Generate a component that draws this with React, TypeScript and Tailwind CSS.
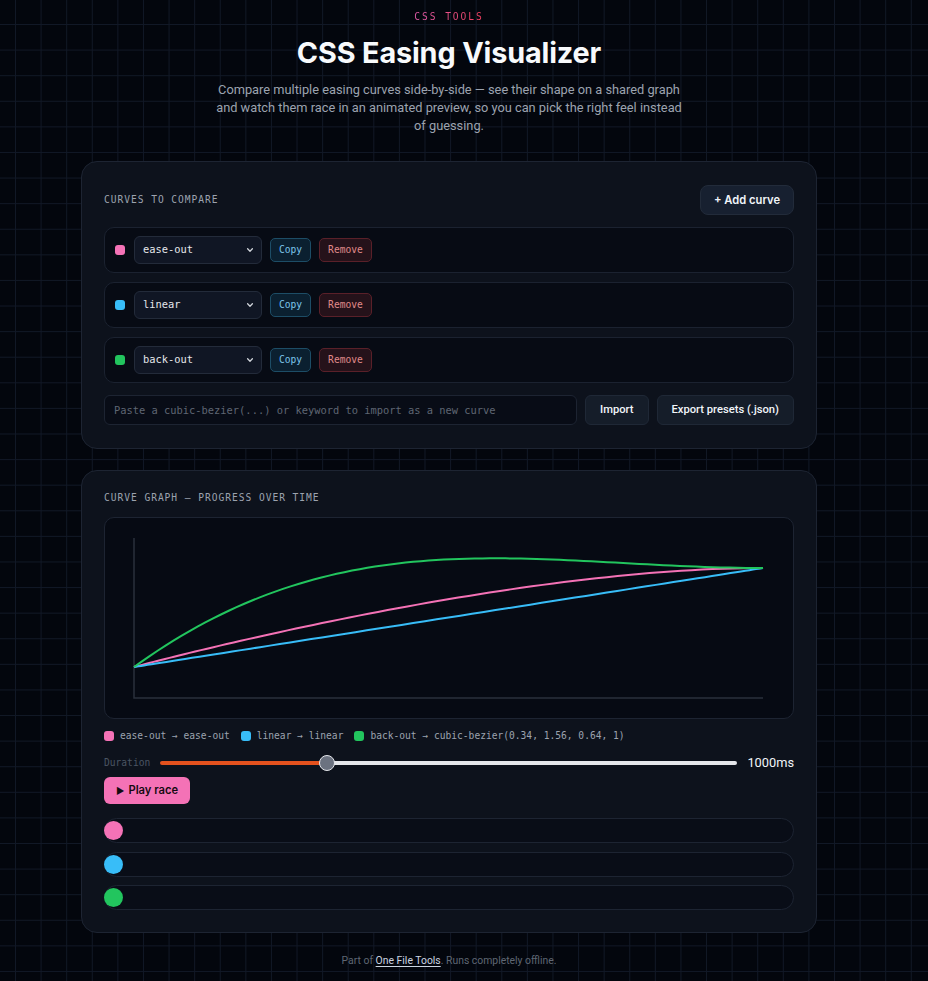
import React from 'react';

type Curve = {
  id: number;
  name: string;
  color: string;
  css: string;
  bez: [number, number, number, number];
};

const curves: Curve[] = [
  { id: 1, name: 'ease-out', color: '#f472b6', css: 'ease-out', bez: [0, 0, 0.58, 1] },
  { id: 2, name: 'linear', color: '#38bdf8', css: 'linear', bez: [0, 0, 1, 1] },
  { id: 3, name: 'back-out', color: '#22c55e', css: 'cubic-bezier(0.34, 1.56, 0.64, 1)', bez: [0.34, 1.56, 0.64, 1] },
];

const mono = "font-['DejaVu_Sans_Mono','Liberation_Mono',monospace]";

// plot area inside the graph box
const PX0 = 29;
const PX1 = 658;
const PY0 = 149; // progress 0
const PY1 = 50; // progress 1

function bez(t: number, a: number, b: number) {
  const u = 1 - t;
  return 3 * u * u * t * a + 3 * u * t * t * b + t * t * t;
}

function curvePath([x1, y1, x2, y2]: Curve['bez']) {
  const pts: string[] = [];
  for (let i = 0; i <= 80; i++) {
    const t = i / 80;
    const x = PX0 + bez(t, x1, x2) * (PX1 - PX0);
    const y = PY0 - bez(t, y1, y2) * (PY0 - PY1);
    pts.push(`${i === 0 ? 'M' : 'L'}${x.toFixed(2)},${y.toFixed(2)}`);
  }
  return pts.join(' ');
}

const Chevron = () => (
  <svg width="8" height="8" viewBox="0 0 10 10" fill="none" stroke="#d1d5db" strokeWidth="1.6" strokeLinecap="round" strokeLinejoin="round">
    <path d="M2 3.5 L5 6.5 L8 3.5" />
  </svg>
);

const CurveRow: React.FC<{ curve: Curve }> = ({ curve }) => (
  <div className="flex h-[46px] items-center gap-2 rounded-[10px] border border-[#1b2230] bg-[#070b14] px-[10px]">
    <span className="mr-px h-[10px] w-[10px] rounded-[3px]" style={{ background: curve.color }} />
    <div className={`flex h-[28px] w-[128px] items-center justify-between rounded-[6px] border border-[#232b3a] bg-[#101624] pl-[8px] pr-[7px] text-[10.4px] text-[#e5e7eb] ${mono}`}>
      <span>{curve.name}</span>
      <Chevron />
    </div>
    <button className={`h-[24px] rounded-[5px] border border-[#1d4d66] bg-[#0b2030] px-[8px] text-[9.6px] text-[#7cc4ea] ${mono}`}>
      Copy
    </button>
    <button className={`h-[24px] rounded-[5px] border border-[#5a2029] bg-[#25121a] px-[8px] text-[9.6px] text-[#e08b8b] ${mono}`}>
      Remove
    </button>
  </div>
);

export default function App() {
  return (
    <div className="min-h-screen bg-[#03060d] [background-image:linear-gradient(to_right,#111826_1px,transparent_1px),linear-gradient(to_bottom,#111826_1px,transparent_1px)] [background-size:25.6px_25.6px] [background-position:15px_24px] font-['Inter','Liberation_Sans',sans-serif] text-white">
      <div className="flex flex-col items-center pr-[30px] pt-[11px] pb-[15px]">
        <div className={`bg-gradient-to-r from-[#e05aa8] to-[#f43f5e] bg-clip-text text-[9.6px] leading-[12px] tracking-[0.2em] text-transparent ${mono}`}>
          CSS TOOLS
        </div>
        <h1 className="mt-[12px] text-[28.8px] font-bold leading-[35px] tracking-[-0.005em] text-[#f8fafc]">CSS Easing Visualizer</h1>
        <p className="mt-[11px] w-[480px] text-center font-['Roboto',sans-serif] text-[12.8px] leading-[18px] text-[#9ca3af]">
          Compare multiple easing curves side-by-side — see their shape on a shared graph and watch them race in an animated preview, so you can pick the right feel instead of guessing.
        </p>

        {/* curve list */}
        <section className="mt-[26px] w-[736px] rounded-[16px] border border-[#1d2432] bg-[#0d121c] px-[22px] pb-[23px] pt-[23px]">
          <div className="flex items-center justify-between">
            <h2 className={`text-[9.6px] tracking-[0.1em] text-[#9ca3af] ${mono}`}>CURVES TO COMPARE</h2>
            <button className="h-[30px] rounded-[8px] border border-[#222b3a] bg-[#172030] px-[13px] text-[11.2px] font-semibold text-[#f1f5f9]">
              + Add curve
            </button>
          </div>
          <div className="mt-[12px] flex flex-col gap-[9px]">
            {curves.map(c => (
              <CurveRow key={c.id} curve={c} />
            ))}
          </div>
          <div className="mt-[12px] flex h-[30px] gap-2">
            <input
              className={`h-full flex-1 rounded-[6px] border border-[#1d2432] bg-[#080c16] px-[9px] text-[10.4px] text-white outline-none placeholder:text-[#5f6673] ${mono}`}
              placeholder="Paste a cubic-bezier(...) or keyword to import as a new curve"
            />
            <button className="h-full rounded-[6px] border border-[#1f2836] bg-[#151d29] px-[14px] font-['Roboto',sans-serif] text-[11.2px] font-medium text-[#f1f5f9]">
              Import
            </button>
            <button className="h-full rounded-[6px] border border-[#1f2836] bg-[#151d29] px-[14px] font-['Roboto',sans-serif] text-[11.2px] font-medium text-[#f1f5f9]">
              Export presets (.json)
            </button>
          </div>
        </section>

        {/* graph + race */}
        <section className="mt-[21px] w-[736px] rounded-[16px] border border-[#1d2432] bg-[#0d121c] px-[22px] pb-[22px] pt-[21px]">
          <h2 className={`text-[9.6px] leading-[12px] tracking-[0.1em] text-[#9ca3af] ${mono}`}>CURVE GRAPH — PROGRESS OVER TIME</h2>
          <div className="mt-[13px] h-[202px] rounded-[10px] border border-[#1d2432] bg-[#060a13]">
            <svg width="688" height="200" viewBox="0 0 688 200" className="block">
              <path d="M29 20 V180 H658" fill="none" stroke="#2a303c" strokeWidth="1.5" />
              {curves.map(c => (
                <path key={c.id} d={curvePath(c.bez)} fill="none" stroke={c.color} strokeWidth="2" strokeLinejoin="round" />
              ))}
            </svg>
          </div>

          <div className={`mt-[11px] flex items-center gap-[11px] text-[9.6px] leading-[12px] text-[#9ca3af] ${mono}`}>
            {curves.map(c => (
              <span key={c.id} className="flex items-center gap-[6px]">
                <span className="h-[10px] w-[10px] rounded-[3px]" style={{ background: c.color }} />
                {c.name} → {c.css}
              </span>
            ))}
          </div>

          <div className="mt-[13px] flex h-[16px] items-center">
            <span className={`w-[56px] text-[9.6px] text-[#4b5563] ${mono}`}>Duration</span>
            <div className="relative flex h-[4px] flex-1 items-center">
              <div className="h-full w-[29%] rounded-l-full bg-[#e4521e]" />
              <div className="h-full flex-1 rounded-r-full bg-[#e5e7eb]" />
              <span className="absolute left-[29%] top-1/2 h-[16px] w-[16px] -translate-x-1/2 -translate-y-1/2 rounded-full border-[1.5px] border-[#e5e7eb] bg-[#6b7280]" />
            </div>
            <span className="ml-[10px] font-['Roboto',sans-serif] text-[12.8px] text-[#f1f5f9]">1000ms</span>
          </div>

          <button className="mt-[6px] flex h-[27px] items-center gap-[4px] rounded-[6px] bg-[#f472b6] px-[12px] text-[11.2px] font-semibold text-[#140a10]">
            <span className="text-[9px]">▶</span> Play race
          </button>

          <div className="mt-[14px] flex flex-col gap-[8.5px]">
            {curves.map(c => (
              <div key={c.id} className="flex h-[25px] items-center rounded-full border border-[#1d2432] bg-[#090d17]">
                <span className="-ml-px h-[19px] w-[19px] rounded-full" style={{ background: c.color }} />
              </div>
            ))}
          </div>
        </section>

        <footer className="mt-[20px] font-['Roboto',sans-serif] text-[10.4px] text-[#5f6673]">
          Part of <a className="text-[#cbd5e1] underline underline-offset-2">One File Tools</a>. Runs completely offline.
        </footer>
      </div>
    </div>
  );
}
